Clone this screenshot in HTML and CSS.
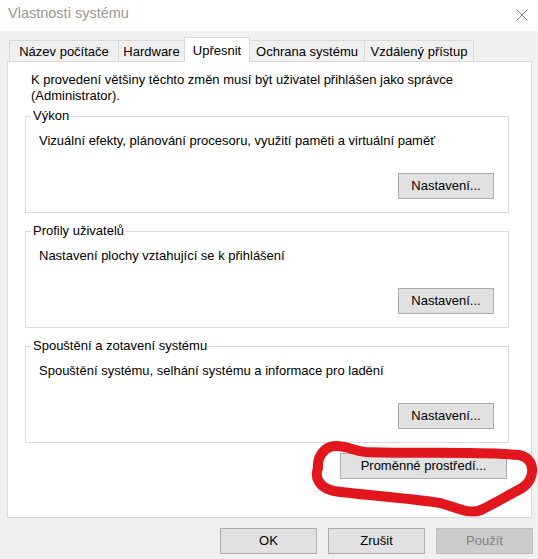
FILE: index.html
```html
<!DOCTYPE html>
<html lang="cs">
<head>
<meta charset="utf-8">
<title>Vlastnosti systému</title>
<link rel="stylesheet" href="styles.css">
</head>
<body>
<div class="window">
  <div class="titlebar">
    <span class="title">Vlastnosti systému</span>
    <svg class="close" width="12" height="12" viewBox="0 0 12 12"><path d="M0.5 0.5 L11.5 11.5 M11.5 0.5 L0.5 11.5" stroke="#8a8a8a" stroke-width="1" fill="none"/></svg>
  </div>
  <div class="tabs">
    <div class="tab tab-name">Název počítače</div>
    <div class="tab tab-hw">Hardware</div>
    <div class="tab tab-adv active">Upřesnit</div>
    <div class="tab tab-prot">Ochrana systému</div>
    <div class="tab tab-remote">Vzdálený přístup</div>
  </div>
  <div class="panel">
    <p class="intro">K provedení většiny těchto změn musí být uživatel přihlášen jako správce<br>(Administrator).</p>
    <fieldset class="group">
      <legend>Výkon</legend>
      <div class="group-body">
        <p class="desc">Vizuální efekty, plánování procesoru, využití paměti a virtuální paměť</p>
        <div class="actions"><button class="btn">Nastavení...</button></div>
      </div>
    </fieldset>
    <fieldset class="group">
      <legend>Profily uživatelů</legend>
      <div class="group-body">
        <p class="desc">Nastavení plochy vztahující se k přihlášení</p>
        <div class="actions"><button class="btn">Nastavení...</button></div>
      </div>
    </fieldset>
    <fieldset class="group">
      <legend>Spouštění a zotavení systému</legend>
      <div class="group-body">
        <p class="desc">Spouštění systému, selhání systému a informace pro ladění</p>
        <div class="actions"><button class="btn">Nastavení...</button></div>
      </div>
    </fieldset>
    <div class="env-row"><button class="btn btn-env">Proměnné prostředí...</button></div>
  </div>
  <div class="footer">
    <button class="btn btn-dlg">OK</button>
    <button class="btn btn-dlg">Zrušit</button>
    <button class="btn btn-dlg disabled">Použít</button>
  </div>
  <svg class="scribble" width="538" height="559" viewBox="0 0 538 559">
    <path d="M318 468 C317 456 325 446 336 446 C348 446 354 451 366 452 C410 454 480 451 519 455 C536 458 536 479 522 488 C507 496 495 503 481 510 C468 515 456 507 440 503 C400 497 360 495 334 491 C320 488 314 478 318 468 Z" fill="none" stroke="#e2161d" stroke-width="10" stroke-linecap="round" stroke-linejoin="round"/>
  </svg>
</div>
</body>
</html>
```

FILE: styles.css
```css
* { box-sizing: border-box; }
html, body {
  margin: 0;
  padding: 0;
  background: #f0f0f0;
}
body {
  font-family: "Liberation Sans", Arial, sans-serif;
  font-size: 13px;
  line-height: 16px;
  color: #000;
}
.window {
  position: relative;
  width: 538px;
  height: 559px;
  overflow: hidden;
  background: #f0f0f0;
}
.titlebar {
  height: 31px;
  background: #fff;
  display: flex;
  justify-content: space-between;
  align-items: flex-start;
  padding: 5px 10px 0 8px;
}
.title {
  font-size: 14.5px;
  line-height: 17px;
  color: #999;
}
.close {
  margin-top: 4px;
  display: block;
}
.tabs {
  display: flex;
  align-items: flex-end;
  height: 24px;
  margin-top: 6px;
  padding-left: 9px;
}
.tab {
  height: 21px;
  border: 1px solid #d9d9d9;
  border-bottom: none;
  background: #f0f0f0;
  text-align: center;
  padding-top: 3px;
  white-space: nowrap;
}
.tab + .tab { margin-left: -1px; }
.tab-name { width: 110px; }
.tab-hw { width: 67px; }
.tab-adv { width: 66px; }
.tab-prot { width: 116px; }
.tab-remote { width: 110px; }
.tab.active {
  height: 25px;
  background: #fff;
  margin-bottom: -1px;
  padding-top: 5px;
  position: relative;
  z-index: 1;
}
.panel {
  margin-left: 7px;
  width: 525px;
  height: 457px;
  background: #fff;
  border: 1px solid #d9d9d9;
  padding: 10px 0 0 17px;
}
.intro {
  margin: 0 0 4px 6px;
}
.group {
  width: 484px;
  margin: 0 0 10px 0;
  padding: 0;
  border: 1px solid #dcdcdc;
  min-width: 0;
}
.group legend {
  margin-left: 5px;
  padding: 0 2px;
  line-height: 16px;
}
.group-body {
  padding: 9px 14px 13px 13px;
}
.desc {
  margin: 0;
}
.actions {
  display: flex;
  justify-content: flex-end;
  margin-top: 24px;
}
.btn {
  font-family: "Liberation Sans", Arial, sans-serif;
  font-size: 13px;
  line-height: 16px;
  color: #000;
  background: #e1e1e1;
  border: 1px solid #adadad;
  height: 26px;
  width: 96px;
  padding: 0;
  margin: 0;
  text-align: center;
}
.env-row {
  display: flex;
  justify-content: flex-end;
  width: 484px;
  padding-right: 2px;
  margin-top: 3px;
}
.btn-env { width: 167px; }
.footer {
  display: flex;
  justify-content: flex-end;
  gap: 11px;
  margin-top: 10px;
  padding-right: 5px;
}
.btn-dlg { width: 97px; }
.btn.disabled {
  background: #cccccc;
  border-color: #bfbfbf;
  color: #838383;
}
.scribble {
  position: absolute;
  left: 0;
  top: 0;
  pointer-events: none;
}
```
